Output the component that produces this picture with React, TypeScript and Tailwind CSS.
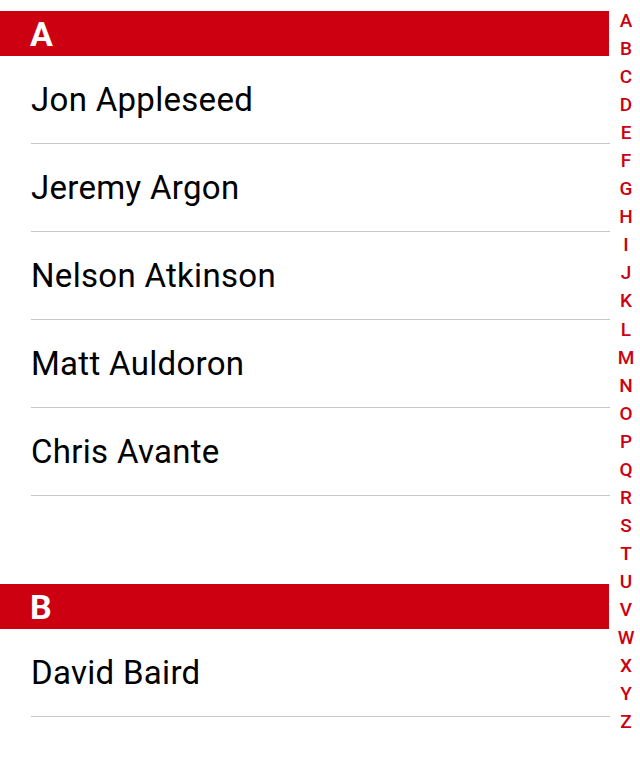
import React from 'react';

const sections = [
  {
    letter: 'A',
    names: ['Jon Appleseed', 'Jeremy Argon', 'Nelson Atkinson', 'Matt Auldoron', 'Chris Avante'],
  },
  {
    letter: 'B',
    names: ['David Baird'],
  },
];

const index = 'ABCDEFGHIJKLMNOPQRSTUVWXYZ'.split('');

export default function App() {
  return (
    <div className="flex w-[640px] h-[764px] overflow-hidden bg-white font-['Roboto',sans-serif]">
      {/* List */}
      <div className="w-[610px] pt-[11px]">
        {sections.map((section) => (
          <div key={section.letter} className="mb-[88px]">
            <div className="h-[45px] w-[609px] bg-[#cc0011] flex items-center pl-[30px]">
              <span className="text-white font-bold text-[34px] leading-none">{section.letter}</span>
            </div>
            {section.names.map((name) => (
              <div key={name} className="ml-[31px] h-[88px] border-b border-[#c8c8c8] flex items-center">
                <span className="text-[33px] tracking-[0.3px] text-black leading-none">{name}</span>
              </div>
            ))}
          </div>
        ))}
      </div>

      {/* Alphabet index */}
      <div className="w-[30px] pt-[7px] flex flex-col items-center">
        {index.map((l) => (
          <div key={l} className="h-[28.05px] leading-[28px] text-[19px] font-medium text-[#cc0011] pl-[2px]">
            {l}
          </div>
        ))}
      </div>
    </div>
  );
}
